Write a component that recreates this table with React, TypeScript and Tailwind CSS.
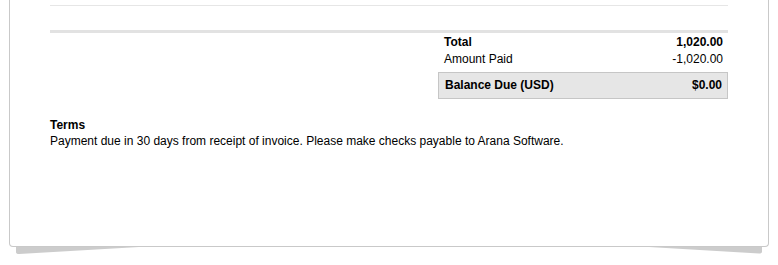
export default function App() {
  return (
    <div className="min-h-screen bg-white text-[12px] text-black" style={{ fontFamily: '"Liberation Sans", Arial, sans-serif' }}>
      <div className="relative mx-[9px]">
        <svg className="absolute left-0 top-[244px]" width="760" height="12" viewBox="0 0 760 12">
          <path d="M7 2 L130 2 L130 3 L10 10 Q7 10 7 8 Z" fill="#cccccc" />
          <path d="M640 2 L753 2 L753 7.5 Q753 9.5 750 9.5 L640 3 Z" fill="#cccccc" />
        </svg>
        <div className="relative h-[247px] rounded-b-[4px] border-x border-b border-[#c9c9c9] bg-white px-[40px] pt-[5px]">
          <div className="h-px bg-[#e6e6e6]" />
          <div className="mt-[24px] h-[3px] bg-[#e2e2e2]" />

          <div className="ml-auto w-[290px] pt-px leading-[17px]">
            <div className="flex justify-between pl-[6px] pr-[5px] font-bold">
              <span>Total</span>
              <span>1,020.00</span>
            </div>
            <div className="flex justify-between pl-[6px] pr-[5px]">
              <span>Amount Paid</span>
              <span>-1,020.00</span>
            </div>
            <div className="mt-[4px] flex h-[27px] items-center justify-between border border-[#c6c6c6] bg-[#e6e6e6] pl-[6px] pr-[5px] font-bold">
              <span>Balance Due (USD)</span>
              <span>$0.00</span>
            </div>
          </div>

          <div className="mt-[18px] leading-[16px]">
            <div className="font-bold">Terms</div>
            <p>Payment due in 30 days from receipt of invoice. Please make checks payable to Arana Software.</p>
          </div>
        </div>
      </div>
    </div>
  )
}
